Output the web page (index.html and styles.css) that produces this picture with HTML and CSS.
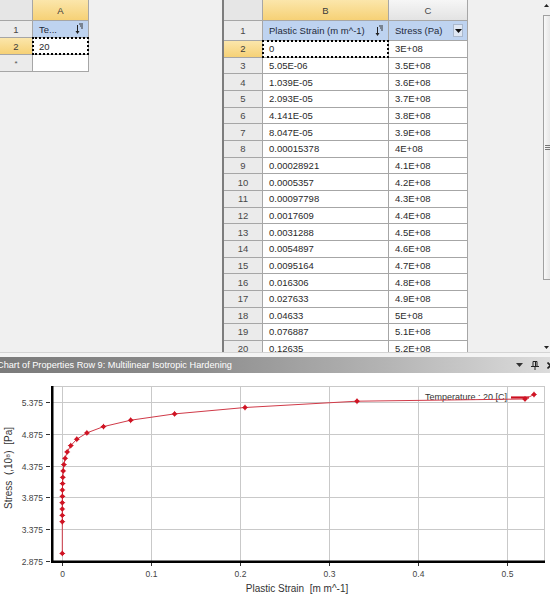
FILE: index.html
```html
<!DOCTYPE html>
<html>
<head>
<meta charset="utf-8">
<link rel="stylesheet" href="styles.css">
</head>
<body>
<div class="top">
  <div class="grid lt">
    <div class="c h corner"></div>
    <div class="c h gold">A</div>
    <div class="c h">1</div>
    <div class="c blue"><span>Te...</span><svg class="sort" width="9" height="12" viewBox="0 0 9 12"><path d="M4 1h4M5 3h3M6 5h2" stroke="#333" stroke-width="1"/><path d="M2.5 2v7" stroke="#222" stroke-width="1"/><path d="M0.5 8h4l-2 3z" fill="#222"/></svg></div>
    <div class="c h gold">2</div>
    <div class="c sel">20</div>
    <div class="c h star">*</div>
    <div class="c"></div>
  </div>

  <div class="grid rt">
    <div class="c h corner"></div>
    <div class="c h gold">B</div>
    <div class="c h ch">C</div>

    <div class="c h">1</div>
    <div class="c blue"><span>Plastic Strain (m m^-1)</span><svg class="sort" width="9" height="12" viewBox="0 0 9 12"><path d="M4 1h4M5 3h3M6 5h2" stroke="#333" stroke-width="1"/><path d="M2.5 2v7" stroke="#222" stroke-width="1"/><path d="M0.5 8h4l-2 3z" fill="#222"/></svg></div>
    <div class="c blue"><span>Stress (Pa)</span><span class="dd"><svg width="7" height="4" viewBox="0 0 7 4"><path d="M0 0h7l-3.5 4z" fill="#111"/></svg></span></div>

    <div class="c h gold">2</div><div class="c sel">0</div><div class="c">3E+08</div>
    <div class="c h">3</div><div class="c">5.05E-06</div><div class="c">3.5E+08</div>
    <div class="c h">4</div><div class="c">1.039E-05</div><div class="c">3.6E+08</div>
    <div class="c h">5</div><div class="c">2.093E-05</div><div class="c">3.7E+08</div>
    <div class="c h">6</div><div class="c">4.141E-05</div><div class="c">3.8E+08</div>
    <div class="c h">7</div><div class="c">8.047E-05</div><div class="c">3.9E+08</div>
    <div class="c h">8</div><div class="c">0.00015378</div><div class="c">4E+08</div>
    <div class="c h">9</div><div class="c">0.00028921</div><div class="c">4.1E+08</div>
    <div class="c h">10</div><div class="c">0.0005357</div><div class="c">4.2E+08</div>
    <div class="c h">11</div><div class="c">0.00097798</div><div class="c">4.3E+08</div>
    <div class="c h">12</div><div class="c">0.0017609</div><div class="c">4.4E+08</div>
    <div class="c h">13</div><div class="c">0.0031288</div><div class="c">4.5E+08</div>
    <div class="c h">14</div><div class="c">0.0054897</div><div class="c">4.6E+08</div>
    <div class="c h">15</div><div class="c">0.0095164</div><div class="c">4.7E+08</div>
    <div class="c h">16</div><div class="c">0.016306</div><div class="c">4.8E+08</div>
    <div class="c h">17</div><div class="c">0.027633</div><div class="c">4.9E+08</div>
    <div class="c h">18</div><div class="c">0.04633</div><div class="c">5E+08</div>
    <div class="c h">19</div><div class="c">0.076887</div><div class="c">5.1E+08</div>
    <div class="c h">20</div><div class="c">0.12635</div><div class="c">5.2E+08</div>
    <div class="c h">21</div><div class="c">0.20549</div><div class="c">5.3E+08</div>
  </div>

  <div class="vs">
    <div class="arr"><svg width="5" height="3" viewBox="0 0 5 3"><path d="M0 3h5L2.5 0z" fill="#222"/></svg></div>
    <div class="thumb"><svg width="5" height="5" viewBox="0 0 5 5"><path d="M0 0.5h5M0 2.5h5M0 4.5h5" stroke="#777" stroke-width="1"/></svg></div>
    <div class="fill"></div>
    <div class="arr"><svg width="5" height="3" viewBox="0 0 5 3"><path d="M0 0h5L2.5 3z" fill="#222"/></svg></div>
  </div>
</div>

<div class="split"></div>

<div class="tb">
  <span class="t">Chart of Properties Row 9: Multilinear Isotropic Hardening</span>
  <div class="ic">
    <svg width="7" height="4" viewBox="0 0 7 4"><path d="M0 0h7L3.5 4z" fill="#333"/></svg>
    <svg width="8" height="9" viewBox="0 0 8 9"><path d="M2 0.5h4v5H2zM0 5.5h8M4 5.5V9" stroke="#222" stroke-width="1" fill="none"/><path d="M4.5 1v4" stroke="#222"/></svg>
    <svg width="7" height="7" viewBox="0 0 7 7"><path d="M0.5 0.5l6 6M6.5 0.5l-6 6" stroke="#222" stroke-width="1.6"/></svg>
  </div>
</div>

<div class="chart">
<svg width="550" height="227" viewBox="0 373 550 227">
  <defs>
    <g id="mk"><path d="M0,-3.2 L1.1,-1.1 L3.2,0 L1.1,1.1 L0,3.2 L-1.1,1.1 L-3.2,0 L-1.1,-1.1Z" fill="#cc1020"/><circle r="1.9" fill="#d01424"/></g>
  </defs>
  <g class="grd">
    <path d="M53 386.5H544.5M53 402.5H544M53 434.5H544M53 466.5H544M53 497.5H544M53 529.5H544"/>
    <path d="M62.5 386V561M151.5 386V561M240.5 386V561M329.5 386V561M418.5 386V561M507.5 386V561M544.5 386V561"/>
  </g>
  <rect x="51" y="386" width="2.5" height="177" fill="#000"/>
  <rect x="51" y="560.5" width="494" height="2.5" fill="#000"/>
  <g class="tk">
    <path d="M46 402.5h4M46 434.5h4M46 466.5h4M46 497.5h4M46 529.5h4M46 561.5h4"/>
    <path d="M62.5 563v3M151.5 563v3M240.5 563v3M329.5 563v3M418.5 563v3M507.5 563v3"/>
  </g>
  <g class="lbl" text-anchor="end">
    <text x="43" y="405.5">5.375</text>
    <text x="43" y="437.5">4.875</text>
    <text x="43" y="469.5">4.375</text>
    <text x="43" y="500.5">3.875</text>
    <text x="43" y="532.5">3.375</text>
    <text x="43" y="564.5">2.875</text>
  </g>
  <g class="lbl" text-anchor="middle">
    <text x="62.5" y="577">0</text>
    <text x="151.5" y="577">0.1</text>
    <text x="240.5" y="577">0.2</text>
    <text x="329.5" y="577">0.3</text>
    <text x="418.5" y="577">0.4</text>
    <text x="507.5" y="577">0.5</text>
  </g>
  <text class="ttl" x="297" y="592" text-anchor="middle">Plastic Strain  [m m^-1]</text>
  <text class="ttl" transform="translate(12,468) rotate(-90)" text-anchor="middle">Stress  (,10⁸)  [Pa]</text>
  <text class="leg" x="425" y="400">Temperature : 20 [C]</text>
  <path d="M511 397.5H529" stroke="#cc1020" stroke-width="2.2"/>
  <polyline class="crv" points="62.3,553.4 62.3,521.7 62.3,515.3 62.3,509 62.3,502.7 62.4,496.3 62.4,490 62.6,483.6 62.8,477.3 63.2,470.9 63.9,464.6 65.1,458.3 67.2,451.9 70.8,445.6 76.8,439.2 86.9,432.9 103.5,426.6 130.7,420.2 174.6,413.9 245,407.5 357,401.2 525,399 534,394.5"/>
  <use href="#mk" x="62.3" y="553.4"/>
  <use href="#mk" x="62.3" y="521.7"/>
  <use href="#mk" x="62.3" y="515.3"/>
  <use href="#mk" x="62.3" y="509"/>
  <use href="#mk" x="62.3" y="502.7"/>
  <use href="#mk" x="62.4" y="496.3"/>
  <use href="#mk" x="62.4" y="490"/>
  <use href="#mk" x="62.6" y="483.6"/>
  <use href="#mk" x="62.8" y="477.3"/>
  <use href="#mk" x="63.2" y="470.9"/>
  <use href="#mk" x="63.9" y="464.6"/>
  <use href="#mk" x="65.1" y="458.3"/>
  <use href="#mk" x="67.2" y="451.9"/>
  <use href="#mk" x="70.8" y="445.6"/>
  <use href="#mk" x="76.8" y="439.2"/>
  <use href="#mk" x="86.9" y="432.9"/>
  <use href="#mk" x="103.5" y="426.6"/>
  <use href="#mk" x="130.7" y="420.2"/>
  <use href="#mk" x="174.6" y="413.9"/>
  <use href="#mk" x="245" y="407.5"/>
  <use href="#mk" x="357" y="401.2"/>
  <use href="#mk" x="525" y="399"/>
  <use href="#mk" x="534" y="394.5"/>
</svg>
</div>
</body>
</html>
```

FILE: styles.css
```css
* { box-sizing: border-box; }
body {
  margin: 0;
  width: 550px;
  height: 600px;
  overflow: hidden;
  background: #fff;
  font-family: "Liberation Sans", Arial, sans-serif;
}
.top {
  display: flex;
  height: 352px;
  background: #f0f0f0;
  overflow: hidden;
}
.grid {
  display: grid;
  gap: 1px;
  background: #a6a6a6;
  align-self: flex-start;
}
.lt {
  grid-template-columns: 32px 55px;
  grid-template-rows: 20px 16px 16px 16px;
  border-right: 1px solid #a6a6a6;
  border-bottom: 1px solid #a6a6a6;
}
.rt {
  margin-left: 133px;
  border-left: 2px solid #7d7d7d;
  border-right: 1px solid #a6a6a6;
  grid-template-columns: 38px 125px 78px;
  grid-template-rows: 20px 19px;
  grid-auto-rows: 15.667px;
}
.c {
  background: #fff;
  color: #2a2a2a;
  font-size: 9.5px;
  display: flex;
  align-items: center;
  padding-left: 6px;
  white-space: nowrap;
  overflow: hidden;
}
.h {
  background: #ebebeb;
  color: #484848;
  justify-content: center;
  padding-left: 0;
}
.corner { background: #e6e6e6; }
.ch { background: linear-gradient(#f6f6f6, #e3e3e3); }
.gold { background: linear-gradient(#fbe6ab, #f6d176); color: #3a3a3a; }
.star { font-size: 8px; color: #555; }
.blue {
  background: #bed3f0;
  justify-content: space-between;
  padding-right: 4px;
  color: #1e2a3a;
}
.sort { flex: none; }
.dd {
  width: 10px;
  height: 13px;
  background: #dfe7f3;
  border: 1px solid #aab8cc;
  display: flex;
  align-items: center;
  justify-content: center;
}
.sel {
  position: relative;
  outline: 2px dotted #000;
  outline-offset: -1px;
}
.vs {
  margin-left: auto;
  width: 7px;
  display: flex;
  flex-direction: column;
}
.arr {
  height: 10px;
  display: flex;
  align-items: center;
  justify-content: center;
}
.thumb {
  margin-top: 5px;
  height: 265px;
  border: 1px solid #a0a0a0;
  border-right: 0;
  background: linear-gradient(to right, #f8f8f8, #e6e6e6);
  display: flex;
  align-items: center;
  justify-content: center;
}
.fill { flex: 1; }
.split {
  height: 5px;
  background: #f4f4f4;
  border-top: 1px solid #d4d4d4;
}
.tb {
  height: 16px;
  display: flex;
  align-items: center;
  background: linear-gradient(to right, #7b7b7b 0%, #8c8c8c 35%, #b4b4b4 70%, #dcdcdc 100%);
  color: #fff;
  font-size: 9.2px;
}
.tb .t {
  flex: 1;
  margin-left: -3px;
  white-space: nowrap;
}
.tb .ic {
  display: flex;
  align-items: center;
  gap: 8px;
  margin-right: -4px;
}
.chart { height: 227px; }
.chart svg { display: block; }
.grd path { stroke: #c9c9c9; stroke-width: 1; fill: none; }
.tk path { stroke: #333; stroke-width: 1; fill: none; }
.lbl { font-family: "Liberation Sans", Arial, sans-serif; font-size: 8.5px; fill: #444; }
.ttl { font-family: "Liberation Sans", Arial, sans-serif; font-size: 10px; fill: #333; white-space: pre; }
.leg { font-family: "Liberation Sans", Arial, sans-serif; font-size: 9px; fill: #333; }
.crv { fill: none; stroke: #d03a48; stroke-width: 1; }
```
